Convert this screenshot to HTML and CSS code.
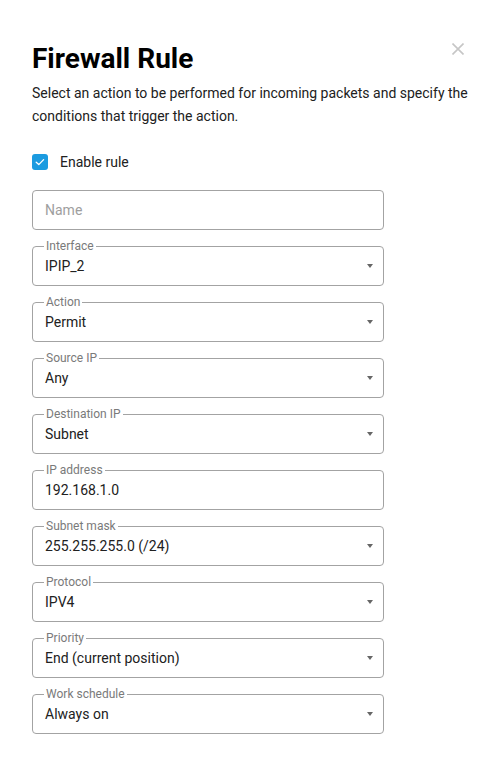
FILE: index.html
```html
<!DOCTYPE html>
<html lang="en">
<head>
<meta charset="utf-8">
<title>Firewall Rule</title>
<link rel="stylesheet" href="styles.css">
</head>
<body>
<div class="dialog">
  <div class="header">
    <h1 class="title">Firewall Rule</h1>
    <button class="close" aria-label="Close">
      <svg width="12" height="12" viewBox="0 0 12 12"><path d="M0.5 0.5 L11.5 11.5 M11.5 0.5 L0.5 11.5" stroke="#c6c6c6" stroke-width="1.6" fill="none"/></svg>
    </button>
  </div>
  <p class="desc">Select an action to be performed for incoming packets and specify the conditions that trigger the action.</p>
  <label class="check-row">
    <span class="checkbox">
      <svg width="16" height="16" viewBox="0 0 16 16"><path d="M4.2 8.2 L6.8 10.6 L11.6 5.6" stroke="#fff" stroke-width="1.3" fill="none" stroke-linecap="round" stroke-linejoin="round"/></svg>
    </span>
    <span class="check-label">Enable rule</span>
  </label>
  <div class="fields">
    <div class="field"><span class="placeholder">Name</span></div>
    <div class="field"><span class="label">Interface</span><span class="value">IPIP_2</span><span class="arrow"></span></div>
    <div class="field"><span class="label">Action</span><span class="value">Permit</span><span class="arrow"></span></div>
    <div class="field"><span class="label">Source IP</span><span class="value">Any</span><span class="arrow"></span></div>
    <div class="field"><span class="label">Destination IP</span><span class="value">Subnet</span><span class="arrow"></span></div>
    <div class="field"><span class="label">IP address</span><span class="value">192.168.1.0</span></div>
    <div class="field"><span class="label">Subnet mask</span><span class="value">255.255.255.0 (/24)</span><span class="arrow"></span></div>
    <div class="field"><span class="label">Protocol</span><span class="value">IPV4</span><span class="arrow"></span></div>
    <div class="field"><span class="label">Priority</span><span class="value">End (current position)</span><span class="arrow"></span></div>
    <div class="field"><span class="label">Work schedule</span><span class="value">Always on</span><span class="arrow"></span></div>
  </div>
</div>
</body>
</html>
```
FILE: styles.css
```css
html, body {
  margin: 0;
  padding: 0;
  background: #ffffff;
}
body {
  font-family: Roboto, "Liberation Sans", Arial, sans-serif;
  color: #212121;
}
.dialog {
  padding: 42px 24px 0 32px;
}
.header {
  display: flex;
  align-items: flex-start;
}
.title {
  flex: 1;
  margin: 0;
  font-size: 28px;
  line-height: 34px;
  font-weight: 700;
  color: #000;
}
.close {
  margin: 1px 12px 0 0;
  padding: 0;
  border: 0;
  background: none;
  width: 12px;
  height: 12px;
  display: block;
}
.close svg {
  display: block;
}
.desc {
  margin: 6px 0 0 0;
  font-size: 14px;
  line-height: 23px;
  color: #212121;
}
.check-row {
  margin-top: 24px;
  display: flex;
  align-items: center;
  height: 20px;
  gap: 12px;
}
.checkbox {
  width: 16px;
  height: 16px;
  border-radius: 3px;
  background: #1b9be0;
  display: block;
}
.checkbox svg {
  display: block;
}
.check-label {
  font-size: 14px;
  line-height: 20px;
  color: #212121;
}
.fields {
  margin-top: 18px;
  display: flex;
  flex-direction: column;
  gap: 16px;
}
.field {
  position: relative;
  box-sizing: border-box;
  width: 352px;
  height: 40px;
  border: 1px solid #a3a3a3;
  border-radius: 4px;
  padding: 0 10px 0 12px;
  display: flex;
  align-items: center;
  font-size: 14px;
}
.label {
  position: absolute;
  left: 11px;
  top: -8px;
  padding: 0 2px;
  background: #fff;
  font-size: 12px;
  line-height: 14px;
  color: #7a7a7a;
}
.value {
  flex: 1;
  line-height: 20px;
  color: #212121;
  padding-bottom: 1px;
}
.placeholder {
  flex: 1;
  color: #9e9e9e;
  line-height: 20px;
}
.arrow {
  width: 0;
  height: 0;
  border-left: 3px solid transparent;
  border-right: 3px solid transparent;
  border-top: 4px solid #666;
}
```
